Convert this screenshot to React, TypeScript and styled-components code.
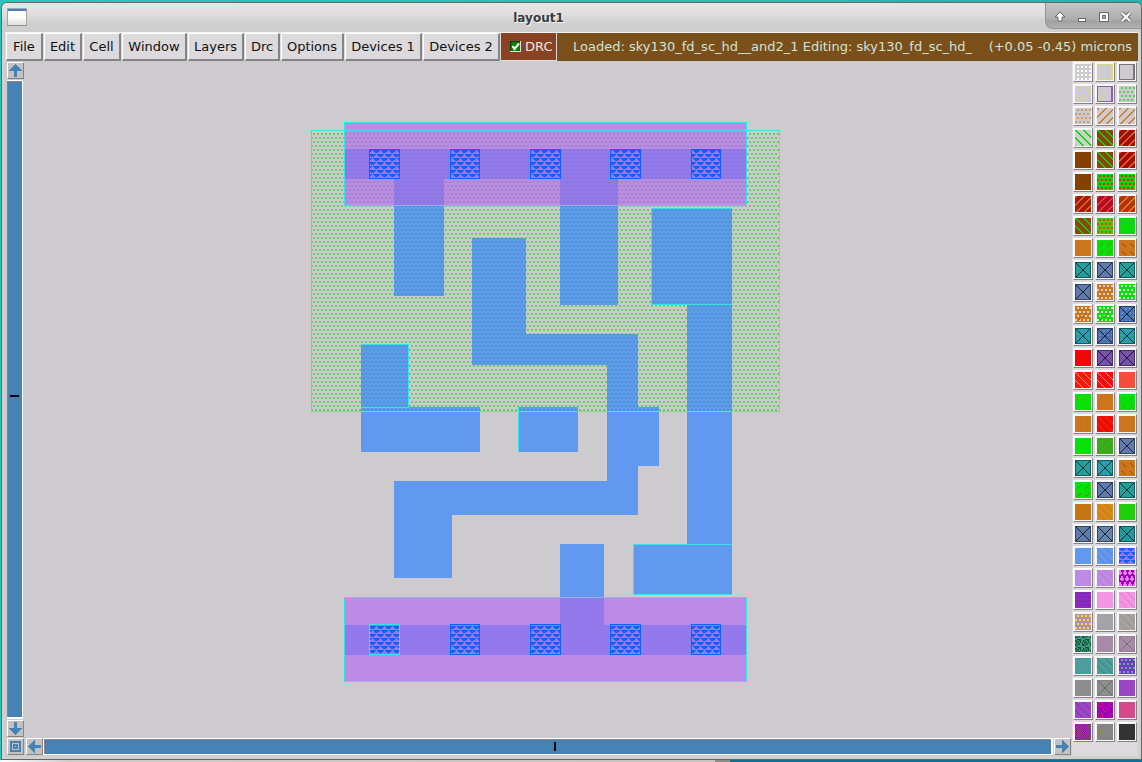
import React from 'react';
import styled, { createGlobalStyle } from 'styled-components';

const Global = createGlobalStyle`
  html, body { margin: 0; padding: 0; overflow: hidden; }
  body { font-family: "DejaVu Sans", sans-serif; background: #2bbab3; }
  * { box-sizing: border-box; }
`;

const Desktop = styled.div`
  width: 1142px;
  height: 762px;
  padding: 2px 0 0 1px;
  display: flex;
  flex-direction: column;
  background: linear-gradient(90deg, #2bc4bd, #38b8b0 60%, #2ab0b0);
`;

const WindowFrame = styled.div`
  width: 1141px;
  height: 758px;
  flex: none;
  border: 1px solid #606a69;
  border-bottom-color: #626664;
  border-radius: 6px 6px 0 0;
  background: #d1d0d1;
  overflow: hidden;
  display: flex;
  flex-direction: column;
`;

const Behind = styled.div`
  height: 2px;
  margin-left: -1px;
  display: grid;
  grid-template-columns: 715px 15px 1fr;
`;
const BehindPart = styled.div<{ $bg: string }>`
  background: ${p => p.$bg};
`;

const TitleBar = styled.div`
  height: 29px;
  flex: none;
  display: flex;
  background: linear-gradient(#e8e5e6 0, #e2dfe1 10px, #d6d5d7 16px, #cfcfcf 21px, #cdcdcd 29px);
`;
const AppIcon = styled.div`
  width: 20px;
  height: 18px;
  margin: 5px 0 0 5px;
  border: 1px solid #a4a4a2;
  border-top: 1px solid #9eacc0;
  border-bottom: 1px solid #8e908e;
  background: linear-gradient(#4f7bb5 0 2px, #fff 2px 8px, #dfe1d6);
`;
const Title = styled.div`
  flex: 1;
  padding: 7px 0 0 5px;
  text-align: center;
  font-size: 12px;
  line-height: 17px;
  font-weight: bold;
  color: #3a3a3a;
  text-shadow: 1px 1px #f5f5f5;
`;
const Controls = styled.div`
  width: 96px;
  height: 26px;
  border: 1px solid #949494;
  border-width: 0 0 1px 1px;
  border-radius: 0 0 0 8px;
  background: linear-gradient(#c6c6c6, #acacac 17px, #a0a0a0 18px, #b2b2b2);
`;

const MenuRow = styled.div`
  height: 29px;
  flex: none;
  margin: 0 3px 0 3px;
  padding-left: 1px;
  border-top: 1px solid #f5f5f5;
  display: flex;
  background: #dcdadc;
`;
const MenuButton = styled.div<{ $w: number }>`
  width: ${p => p.$w}px;
  height: 28px;
  margin-right: 1px;
  border: 1px solid #fff;
  border-right: 2px solid #858385;
  border-bottom: 2px solid #858385;
  background: #dcdadc;
  color: #111;
  font-size: 13px;
  line-height: 25px;
  text-align: center;
  white-space: nowrap;
`;
const DrcToggle = styled.div`
  width: 55px;
  height: 27px;
  display: flex;
  align-items: center;
  gap: 4px;
  padding-left: 9px;
  background: #8a4322;
  color: #eee6e2;
  font-size: 13px;
`;
const StatusBar = styled.div`
  flex: 1;
  margin-left: 1px;
  padding: 0 6px 0 16px;
  background: #7b4f19;
  color: #cde4dd;
  display: flex;
  justify-content: space-between;
  font-size: 13px;
  line-height: 27px;
  white-space: pre;
`;

const Body = styled.div`
  flex: 1;
  min-height: 0;
  padding: 0 3px 3px 3px;
  display: grid;
  grid-template-columns: 1067px 66px;
  background: #d1d0d1;
`;
const Workspace = styled.div`
  padding-top: 1px;
  display: grid;
  grid-template-columns: 19px 1048px;
  grid-template-rows: 676px 18px;
  background: #cdcbcd;
`;
const VScroll = styled.div`
  display: flex;
  flex-direction: column;
  padding-left: 2px;
  gap: 1px;
`;
const ArrowBox = styled.div`
  width: 17px;
  height: 17px;
  flex: none;
  border: 1px solid #fff;
  border-right-color: #858385;
  border-bottom-color: #858385;
  background: #c3c2c3;
  svg { display: block; }
`;
const HScroll = styled.div`
  display: flex;
  align-items: flex-start;
  padding-left: 2px;
  ${ArrowBox}:last-child { margin-left: 1px; }
`;
const Corner = styled.div`
  padding-left: 2px;
`;
const Track = styled.div<{ $vertical?: boolean }>`
  flex: none;
  display: flex;
  align-items: center;
  justify-content: center;
  width: ${p => (p.$vertical ? 16 : 1010)}px;
  height: ${p => (p.$vertical ? 639 : 17)}px;
  border: solid #fff;
  border-width: ${p => (p.$vertical ? '1px 1px 2px 0' : '1px 2px 1px 1px')};
  background: #4682b4;
  box-shadow: inset 1px 1px #858385;
`;
const Marker = styled.div<{ $vertical?: boolean }>`
  width: ${p => (p.$vertical ? 9 : 2)}px;
  height: ${p => (p.$vertical ? 2 : 9)}px;
  background: #000;
  margin: ${p => (p.$vertical ? '0 0 7px 0' : '0 0 0 14px')};
`;

const Palette = styled.div`
  padding: 1px 0 0 1px;
  display: grid;
  grid-template-columns: repeat(3, 20px);
  grid-auto-rows: 20px;
  gap: 2px;
  align-content: start;
  background: #dcdadc;
`;
const SwatchButton = styled.div`
  border: 1px solid #fff;
  border-right-color: #858385;
  border-bottom-color: #858385;
  padding: 1px;
  background: #f5f3f5;
  svg { display: block; }
`;

type Kind = 'solid' | 'grid' | 'stag' | 'frame' | 'back' | 'fwd' | 'x' | 'xd' | 'dash' | 'dashb' | 'mesh' | 'meshd' | 'tri' | 'dia' | 'maze' | 'ring' | 'check' | 'thinb' | 'xs' | 'wave';
type Spec = [Kind, string, string?];

const G = '#cdcbcd';
const LAYERS: Spec[] = [
  ['grid', '#cdcbcd', '#fff'], ['frame', G, '#dfd978'], ['frame', G, '#77757a'],
  ['thinb', G, '#e6e03c'], ['frame', G, '#9058c0'], ['stag', G, '#5ccd5c'],
  ['stag', G, '#d59a66'], ['fwd', G, '#d27b28'], ['fwd', G, '#d27b28'],
  ['back', '#c7d6c7', '#10d010'], ['back', '#8a4304', '#10d010'], ['fwd', '#a80808', '#d0701c'],
  ['solid', '#854103'], ['back', '#8a4304', '#10d010'], ['fwd', '#a80808', '#d0701c'],
  ['solid', '#854103'], ['stag', '#09d809', '#e8200c'], ['stag', '#09d809', '#e8200c'],
  ['fwd', '#aa190a', '#d0701c'], ['fwd', '#b80b25', '#d84830'], ['fwd', '#b9320a', '#d8821c'],
  ['back', '#8d4610', '#12cc10'], ['stag', '#43cc0c', '#e8400c'], ['solid', '#09dd09'],
  ['solid', '#cd751d'], ['dash', '#09e009', '#6a8010'], ['dashb', '#cd751d', '#9a4b10'],
  ['x', '#22a09b', '#062f35'], ['x', '#607aa9', '#182339'], ['x', '#22a09b', '#062f35'],
  ['x', '#607aa9', '#182339'], ['mesh', '#cd751d', '#e0d2ca'], ['mesh', '#09e009', '#d9f0d9'],
  ['meshd', '#cd751d', '#e0d2ca'], ['meshd', '#09e009', '#d9f0d9'], ['xd', '#4e70ac', '#182339'],
  ['xd', '#22a09b', '#062f35'], ['xd', '#526da6', '#182339'], ['xd', '#22a09b', '#062f35'],
  ['solid', '#f00808'], ['x', '#7653a8', '#251343'], ['x', '#7653a8', '#251343'],
  ['thinb', '#f51707', '#e9aa70'], ['thinb', '#f50b08', '#e6a9ae'], ['solid', '#f84b38'],
  ['solid', '#09e009'], ['solid', '#cd751d'], ['dash', '#09e009', '#28b210'],
  ['dashb', '#cd751d', '#bd6815'], ['thinb', '#f40808', '#c84b08'], ['solid', '#cd751d'],
  ['solid', '#09e009'], ['fwd', '#3da81d', '#36b41e'], ['x', '#607aa9', '#182339'],
  ['x', '#22a09b', '#062f35'], ['xd', '#22a09b', '#062f35'], ['dashb', '#cd751d', '#9a4b10'],
  ['dash', '#09e009', '#6a6b10'], ['x', '#607aa9', '#182339'], ['x', '#22a09b', '#062f35'],
  ['solid', '#c77413'], ['thinb', '#d58a17', '#c77413'], ['solid', '#20cf09'],
  ['x', '#607aa9', '#182339'], ['x', '#6585ad', '#182339'], ['x', '#22999b', '#062f35'],
  ['solid', '#6199ee'], ['thinb', '#6199ee', '#587fc5'], ['tri', '#9479ec', '#0b62ff'],
  ['solid', '#bd8be6'], ['thinb', '#bd8be6', '#c873b9'], ['dia', '#a000c0', '#e87ce8'],
  ['wave', '#9227ce', '#6c3494'], ['solid', '#f195e4'], ['thinb', '#f195e4', '#ed75ac'],
  ['stag', '#b58bae', '#efe32a'], ['solid', '#a5a3a7'], ['thinb', '#a5a3a1', '#a98c70'],
  ['maze', '#45928e', '#075c29'], ['solid', '#a68aa7'], ['xs', '#a68aa7', '#777077'],
  ['solid', '#4b9e9b'], ['thinb', '#4b9e9b', '#3b7e71'], ['stag', '#7439b8', '#55b0b0'],
  ['solid', '#8b8e8c'], ['xs', '#8b8e8c', '#666866'], ['solid', '#9a47c5'],
  ['thinb', '#9a47c5', '#853095'], ['ring', '#a000b5', '#cf1585'], ['solid', '#d64a8d'],
  ['check', '#8c198e', '#7a6159'], ['solid', '#868486'], ['solid', '#313431'],
];

const S = 16;

function marks(kind: Kind, fg: string) {
  const out: React.ReactNode[] = [];
  const dot = (x: number, y: number, w = 1, h = 1, c = fg) =>
    out.push(<rect key={out.length} x={x} y={y} width={w} height={h} fill={c} />);
  const lines = (dir: number, period: number, w: number) => {
    for (let y = 0; y < S; y++)
      for (let x = 0; x < S; x++) {
        const m = (((x - dir * y) % period) + period) % period;
        if (m < w) dot(x, y);
      }
  };
  switch (kind) {
    case 'grid':
      for (let y = 2; y < S; y += 4) for (let x = 2; x < S; x += 4) dot(x, y, 2, 2);
      break;
    case 'stag':
      for (let y = 1, r = 0; y < S; y += 4, r++) for (let x = r % 2 ? 0 : 2; x < S; x += 4) dot(x, y, 2, 2);
      break;
    case 'frame':
      dot(0, 0, S, 1); dot(0, 0, 1, S); dot(0, S - 1, S, 1); dot(S - 2, 0, 2, S);
      break;
    case 'back': lines(1, 8, 2); break;
    case 'thinb': lines(1, 8, 1); break;
    case 'fwd': lines(-1, 8, 2); break;
    case 'dash':
    case 'dashb':
      for (let i = 0; i < S; i++)
        for (let x = 0; x < S; x++) {
          const d = kind === 'dash' ? x + i : x - i + 32;
          if (d % 8 === 0 && i % 8 > 2 && i % 8 < 7) dot(x, i);
        }
      break;
    case 'mesh':
    case 'meshd':
      for (let y = 1, r = 0; y < S; y += 4, r++)
        for (let x = r % 2 ? 0 : 2; x < S; x += 4) dot(x, y, 2, 2);
      if (kind === 'meshd') for (let i = 3; i < 15; i += 3) dot(i, 16 - i, 2, 1, '#9a6a20');
      break;
    case 'tri':
      for (let r = 0; r < 5; r++)
        for (let x = r % 2 ? -4 : 0; x < S; x += 8) {
          dot(x, r * 4, 7); dot(x + 1, r * 4 + 1, 5); dot(x + 2, r * 4 + 2, 3);
        }
      break;
    case 'dia':
      for (let r = 0; r < 3; r++)
        for (let c = 0; c < 4; c++) {
          const x = c * 5 + (r % 2 ? 2 : 0), y = r * 6;
          dot(x, y, 2, 5); dot(x - 1, y + 2, 4, 2);
        }
      break;
    case 'wave':
      for (let y = 0; y < S; y += 4) for (let x = 0; x < S; x += 6) { dot(x, y, 3, 1); dot(x + 2, y + 1, 4, 1); }
      break;
    case 'maze':
      for (let y = 0; y < S; y++) for (let x = 0; x < S; x++) if ((x * 3 + y * 5 + ((x * y) >> 1)) % 4 < 2) dot(x, y);
      break;
    case 'check':
      for (let y = 0; y < S; y++) for (let x = y % 2; x < S; x += 2) if (x % 8 !== 1 || y % 4 !== 1) dot(x, y);
      break;
    case 'ring':
      for (const [x, y] of [[6, 5], [1, 0], [12, 0], [1, 11], [12, 11]]) {
        dot(x + 1, y, 3, 1); dot(x, y + 1, 1, 3); dot(x + 4, y + 1, 1, 3); dot(x + 1, y + 4, 3, 1);
      }
      break;
    case 'x':
    case 'xd':
    case 'xs':
      if (kind === 'xd')
        for (let y = 2; y < S; y += 4) for (let x = 2; x < S; x += 4) dot(x, y, 2, 2, '#4f8fe0');
      for (let i = 1; i < S - 1; i++) { dot(i, i); dot(S - 1 - i, i); }
      out.push(<rect key="edge" x=".5" y=".5" width={S - 1} height={S - 1} fill="none" stroke={fg} strokeOpacity={kind === 'xs' ? 0.3 : 0.6} />);
      break;
  }
  return out;
}

function Swatch({ spec }: { spec: Spec }) {
  const [kind, bg, fg] = spec;
  return (
    <SwatchButton>
      <svg width={S} height={S} viewBox={`0 0 ${S} ${S}`} shapeRendering="crispEdges">
        <rect width={S} height={S} fill={bg} />
        {marks(kind, fg ?? bg)}
      </svg>
    </SwatchButton>
  );
}

function Arrow({ turn }: { turn: number }) {
  return (
    <svg width="15" height="15" viewBox="0 0 15 15" shapeRendering="crispEdges">
      <path transform={`rotate(${turn} 7.5 7.5)`} d="M7 1h1v1h1v1h1v1h1v1h1v1h1v1h1v1H9v6H6V8H1V7h1V6h1V5h1V4h1V3h1V2h1z" fill="#4682b4" />
    </svg>
  );
}

const METAL_WIRES = [
  'M394 179H444V296H394Z', 'M560 179H618V305H560Z', 'M652 208H732V544H687V305H652Z',
  'M634 544H732V595H634Z',
  'M472 238H526V334H638V407H659V466H638V515H452V578H394V481H607V365H472Z',
  'M361 344H408V407H480V452H361Z', 'M518 407H578V452H518Z', 'M560 544H604V598H560Z',
].join('');
const CONTACTS: [number, number][] = [[369, 31], [450, 30], [530, 31], [610, 31], [691, 30]];

// x, y, width, height of the highlighted cell edges
const EDGES = [
  [311, 130, 469, 1], [311, 130, 1, 281],
  [344, 122, 403, 1], [344, 205, 403, 1], [344, 122, 1, 84], [746, 122, 1, 84],
  [344, 597, 403, 1], [344, 681, 403, 1], [344, 597, 1, 85], [746, 597, 1, 85],
  [652, 208, 80, 1], [651, 208, 1, 97], [652, 304, 80, 1],
  [361, 344, 48, 1], [408, 344, 1, 64], [361, 407, 48, 1],
  [518, 407, 1, 45], [633, 544, 99, 1], [633, 544, 1, 51], [633, 594, 99, 1],
];

function Layout() {
  return (
    <svg width="1048" height="676" viewBox="24 62 1048 676" shapeRendering="crispEdges">
      <defs>
        <pattern id="well" x="313" y="133" width="4" height="8" patternUnits="userSpaceOnUse">
          <rect width="2" height="2" fill="#5fd05f" /><path d="M2 4h2v2h-2z" fill="#5fd05f" />
        </pattern>
        <pattern id="wellOver" x="313" y="133" width="4" height="8" patternUnits="userSpaceOnUse">
          <path d="M0 0h2v2H0zM2 4h2v2h-2z" fill="#00a070" fillOpacity=".33" />
        </pattern>
        <pattern id="wellPurple" x="313" y="133" width="4" height="8" patternUnits="userSpaceOnUse">
          <path d="M0 0h2v2H0zM2 4h2v2h-2z" fill="#6a8a9a" fillOpacity=".45" />
        </pattern>
        <pattern id="wellOverlap" x="313" y="133" width="4" height="8" patternUnits="userSpaceOnUse">
          <path d="M0 0h2v2H0zM2 4h2v2h-2z" fill="#8878d8" />
        </pattern>
        <pattern id="contact" x="371" y="150" width="8" height="8" patternUnits="userSpaceOnUse">
          <path d="M0 0h1v1H0zM2 0h6v1H2zM3 1h5v1H3zM4 2h3v1H4zM0 4h5v1H0zM6 4h2v1H6zM0 5h4v1H0zM7 5h1v1H7zM0 6h3v1H0z" fill="#0b62ff" />
        </pattern>
        <clipPath id="wellClip"><rect x="312" y="131" width="467" height="280" /></clipPath>
      </defs>
      <rect x="24" y="62" width="1048" height="676" fill="#cdcbcd" />
      <rect x="312" y="131" width="467" height="280" fill="url(#well)" />
      <path d={METAL_WIRES} fill="#6199ee" />
      <path d={METAL_WIRES} fill="url(#wellOver)" clipPath="url(#wellClip)" />
      {[[122, 84], [597, 85]].map(([y, h]) => <rect key={y} x="344" y={y} width="403" height={h} fill="#bd8be6" />)}
      <rect x="345" y="131" width="401" height="74" fill="url(#wellPurple)" />
      <path d="M344 149h403v30H618v27h-58v-27H444v27H394v-27H344zM344 625H560v-27h44v27h143v30H344z" fill="#9479ec" />
      <path d="M344 149h403v30H618v27h-58v-27H444v27H394v-27H344z" fill="url(#wellOverlap)" />
      {[149, 624].map(y => CONTACTS.map(([x, w]) => {
        const h = y === 149 ? 30 : 31;
        const selected = y === 624 && x === 369;
        return (
          <g key={`${x}-${y}`}>
            <rect x={x} y={y} width={w} height={h} fill={selected ? '#30e4e8' : '#0b62ff'} />
            <rect x={x + 1} y={y + 1} width={w - 2} height={h - 2} fill="#9479ec" />
            <rect x={x + 1} y={y + 1} width={w - 2} height={h - 2} fill="url(#contact)" />
          </g>
        );
      }))}
      <path d="M311 411.5H779.5V131" fill="none" stroke="#68d878" strokeDasharray="2 1" />
      <path d="M361 411.5h119M518 411.5h60M607 411.5h52M687 411.5h45" stroke="#65d8cf" />
      {EDGES.map(([x, y, w, h]) => <rect key={`${x},${y},${w}`} x={x} y={y} width={w} height={h} fill="#30e4e8" />)}
    </svg>
  );
}

const MENUS: [string, number][] = [
  ['File', 37], ['Edit', 38], ['Cell', 38], ['Window', 65], ['Layers', 56],
  ['Drc', 35], ['Options', 63], ['Devices 1', 77], ['Devices 2', 77],
];

export default function App() {
  return (
    <>
      <Global />
      <Desktop>
        <WindowFrame>
          <TitleBar>
            <AppIcon />
            <Title>layout1</Title>
            <Controls>
              <svg width="95" height="25" viewBox="1046 3 95 25">
                <g fill="#fff" stroke="#666" strokeWidth="1">
                  <path d="M1060 12l5 5h-3v4h-4v-4h-3z" />
                  <rect x="1078.5" y="18.500" width="7" height="3" />
                  <path fillRule="evenodd" d="M1099.500 12.500h9v9h-9zM1102.500 15.500v3h3v-3z" />
                </g>
                <path d="M1122 13l8 8m0-8l-8 8" stroke="#666" strokeWidth="4" />
                <path d="M1122 13l8 8m0-8l-8 8" stroke="#fff" strokeWidth="2.300" />
              </svg>
            </Controls>
          </TitleBar>
          <MenuRow>
            {MENUS.map(([name, w]) => <MenuButton key={name} $w={w}>{name}</MenuButton>)}
            <DrcToggle>
              <svg width="11" height="11" viewBox="0 0 11 11">
                <path d="M0 0h11v11H0z" fill="#ddd" /><path d="M0 0h10v10H0z" fill="#063d06" /><path d="M1 1h9v9H1z" fill="#078207" />
                <path d="M2.500 5l2 3L9 2.500" fill="none" stroke="#fff" strokeWidth="2" />
              </svg>
              DRC
            </DrcToggle>
            <StatusBar>
              <span>Loaded: sky130_fd_sc_hd__and2_1 Editing: sky130_fd_sc_hd_</span>
              <span>(+0.05 -0.45) microns</span>
            </StatusBar>
          </MenuRow>
          <Body>
            <Workspace>
              <VScroll>
                <ArrowBox><Arrow turn={0} /></ArrowBox>
                <Track $vertical><Marker $vertical /></Track>
                <ArrowBox><Arrow turn={180} /></ArrowBox>
              </VScroll>
              <Layout />
              <Corner>
                <ArrowBox>
                  <svg width="15" height="15" viewBox="0 0 15 15" shapeRendering="crispEdges">
                    <path fillRule="evenodd" d="M2 2h11v11H2zM4 4v7h7V4zM5 5h5v5H5zM7 7v1h1V7z" fill="#4682b4" />
                  </svg>
                </ArrowBox>
              </Corner>
              <HScroll>
                <ArrowBox><Arrow turn={270} /></ArrowBox>
                <Track><Marker /></Track>
                <ArrowBox><Arrow turn={90} /></ArrowBox>
              </HScroll>
            </Workspace>
            <Palette>{LAYERS.map((spec, i) => <Swatch key={i} spec={spec} />)}</Palette>
          </Body>
        </WindowFrame>
        <Behind>
          <BehindPart $bg="linear-gradient(90deg,#fff,#ccc 70px,#c5c5c5)" />
          <BehindPart $bg="#8c8c8c" />
          <BehindPart $bg="#0e7090" />
        </Behind>
      </Desktop>
    </>
  );
}
